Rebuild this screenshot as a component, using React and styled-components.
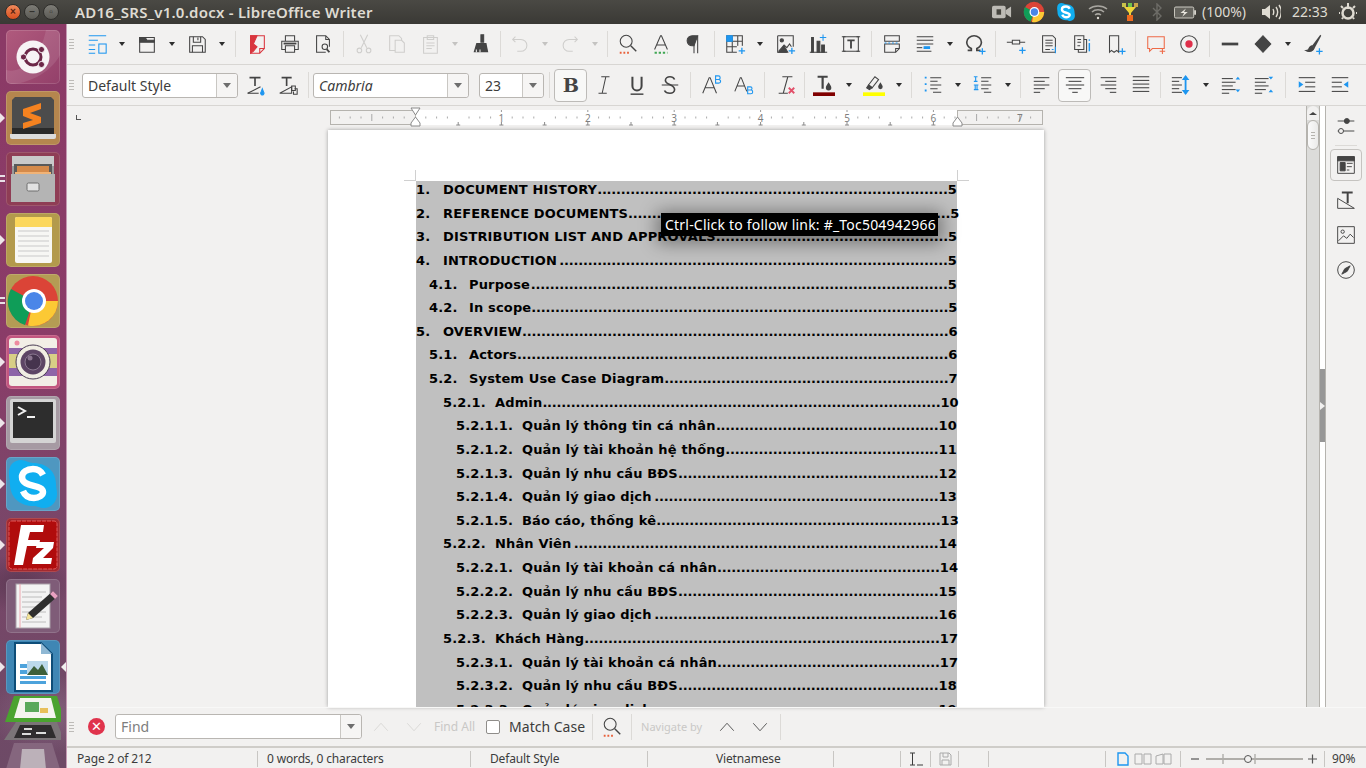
import React from 'react';
import styled, { createGlobalStyle, css } from 'styled-components';

const UI_FONT = `"Noto Sans", "Open Sans", sans-serif`;
const BLUE = '#1e96f0';

const Global = createGlobalStyle`
  html, body { margin: 0; padding: 0; height: 100%; overflow: hidden; }
  body { font-family: ${UI_FONT}; background: #f2f1f0; }
  #root { height: 100%; }
`;

const Screen = styled.div`
  width: 1366px;
  height: 768px;
  display: flex;
  flex-direction: column;
  overflow: hidden;
`;

/* ---------- top panel ---------- */
const Panel = styled.div`
  height: 24px;
  flex: none;
  display: flex;
  align-items: center;
  background: linear-gradient(#4a4944, #3a3935);
  color: #dfdbd2;
`;
const WinButtons = styled.div`
  display: flex;
  gap: 3px;
  margin-left: 5px;
  width: 70px;
`;
const WinButton = styled.span`
  width: 16px;
  height: 16px;
  border-radius: 50%;
  display: flex;
  align-items: center;
  justify-content: center;
  font: bold 10px/1 "Liberation Sans", sans-serif;
  color: #5a2410;
  border: 1px solid #2f2e2b;
  box-sizing: border-box;
  background: ${(p) => (p.$close ? 'linear-gradient(#f08a5c, #d9501e)' : 'linear-gradient(#7d7c76, #5b5a55)')};
  ${(p) => !p.$close && css`color: #32312d;`}
`;
const Title = styled.div`
  font: 600 15px/24px ${UI_FONT};
  letter-spacing: 0.24px;
  flex: 1;
  white-space: nowrap;
`;
const Tray = styled.div`
  display: flex;
  align-items: center;
  height: 24px;
`;
const TraySlot = styled.div`
  width: ${(p) => p.$w}px;
  display: flex;
  justify-content: center;
  align-items: center;
  font: 14px/24px ${UI_FONT};
  white-space: nowrap;
`;

/* ---------- launcher ---------- */
const Body = styled.div`
  flex: 1;
  display: flex;
  min-height: 0;
`;
const Launcher = styled.div`
  width: 67px;
  flex: none;
  box-sizing: border-box;
  padding: 6px 0 0 6px;
  display: flex;
  flex-direction: column;
  gap: 7px;
  overflow: hidden;
  position: relative;
  border-right: 1px solid #c69ab4;
  background:
    radial-gradient(ellipse 50px 30px at 20px 560px, rgba(60, 40, 60, .45), transparent),
    radial-gradient(ellipse 60px 40px at 50px 690px, rgba(190, 170, 190, .25), transparent),
    linear-gradient(#8b3a66 0, #8a3c68 45%, #7c4569 62%, #6d4a66 100%);
`;
const Tile = styled.div`
  width: 54px;
  height: 54px;
  flex: none;
  border-radius: 5px;
  position: relative;
  background: ${(p) => p.$bg};
  box-shadow: inset 0 0 0 1px rgba(255, 255, 255, .14);
  svg { display: block; width: 54px; height: 54px; filter: blur(.35px); }
`;
const Pip = styled.span`
  position: absolute;
  left: -6px;
  top: ${(p) => (p.$double ? 23 : 22)}px;
  ${(p) => (p.$double
    ? css`width: 5px; height: 2px; background: #e8e0e6; box-shadow: 0 5px 0 #e8e0e6;`
    : css`border-left: 5px solid #eee6ea; border-top: 5px solid transparent; border-bottom: 5px solid transparent;`)}
`;
const PipRight = styled.span`
  position: absolute;
  right: -6px;
  top: 22px;
  border-right: 5px solid #f1f0ef;
  border-top: 5px solid transparent;
  border-bottom: 5px solid transparent;
`;
const Folded = styled.svg`
  display: block;
  flex: none;
  width: 61px;
  height: 74px;
  margin: -6px 0 0 -6px;
  filter: blur(.35px);
`;

const UbuntuArt = () => (
  <svg viewBox="0 0 54 54">
    <path d="M0 40C14 44 34 30 40 0h9a5 5 0 0 1 5 5v20C44 44 20 54 5 54a5 5 0 0 1-5-5z" fill="#fff" opacity=".1" />
    <circle cx="27" cy="27" r="16.5" fill="#f7f3f5" />
    <circle cx="27" cy="27" r="8" fill="none" stroke="#6d2748" strokeWidth="3" />
    <circle cx="35.5" cy="19.5" r="3.1" fill="#6d2748" stroke="#f7f3f5" />
    <circle cx="35.5" cy="34.5" r="3.1" fill="#6d2748" stroke="#f7f3f5" />
    <circle cx="17.5" cy="27" r="3.1" fill="#6d2748" stroke="#f7f3f5" />
  </svg>
);
const SublimeArt = () => (
  <svg viewBox="0 0 54 54">
    <path d="M9 6h36l3 3v34H6V9z" fill="#4c4c4c" />
    <path d="M6 37h42v6H6z" fill="#2a2a2a" />
    <path d="M4 43h46v3a2 2 0 0 1-2 2H6a2 2 0 0 1-2-2z" fill="#dcdcdc" />
    <path d="M35 12v6l-11 4 11 4v6l-18 6v-6l10-3-10-4v-7z" fill="#f58220" />
  </svg>
);
const FilesArt = () => (
  <svg viewBox="0 0 54 54">
    <path d="M6 4h42v46H6z" fill="#9a9a9a" />
    <path d="M6 4h42v10H6z" fill="#c9c9c9" />
    <path d="M8 12h38v15H8z" fill="#5a5a5a" />
    <path d="M11 14h32v8H11z" fill="#d58a4a" />
    <path d="M9 20h36v9H9z" fill="#f0b377" />
    <path d="M5 22h44v28H5z" fill="#b4b4b4" />
    <rect x="21" y="31" width="12" height="8" rx="1.5" fill="#e2e2e2" stroke="#6e6e6e" />
  </svg>
);
const NotesArt = () => (
  <svg viewBox="0 0 54 54">
    <rect x="9" y="4" width="37" height="46" rx="2" fill="#f7f7f4" />
    <path d="M9 6a2 2 0 0 1 2-2h33a2 2 0 0 1 2 2v8H9z" fill="#fbd75c" />
    {[18, 23, 28, 33, 38, 43].map((y) => <path key={y} d={`M12 ${y}h31`} stroke="#c9c9c9" />)}
  </svg>
);
const ChromeMark = () => (
  <>
    <circle cx="27" cy="27" r="25" fill="#db4437" />
    <path d="M27 27 5 15a25 25 0 0 0 14 36z" fill="#0f9d58" />
    <path d="M27 27h25a25 25 0 0 1-30 24.500z" fill="#fcc934" />
    <circle cx="28" cy="27" r="12" fill="#fff" />
    <circle cx="28" cy="27" r="9" fill="#4a86e8" />
  </>
);
const ChromeArt = () => <svg viewBox="0 0 54 54"><ChromeMark /></svg>;
const CameraArt = () => (
  <svg viewBox="0 0 54 54">
    <rect x="3" y="3" width="48" height="48" rx="3" fill="#f2eee6" />
    <path d="M3 13h48v6H3zM3 33h48v8H3z" fill="#8e64a8" />
    <path d="M3 19h48v14H3z" fill="#d8cf86" />
    <circle cx="11" cy="8" r="2.500" fill="#ee8ba0" />
    <circle cx="27" cy="27" r="17" fill="#f1eee3" stroke="#4b3d55" />
    <circle cx="27" cy="27" r="12.500" fill="#5d4565" />
    <circle cx="27" cy="27" r="8" fill="#46344e" stroke="#8a7890" />
    <circle cx="24" cy="23" r="2.500" fill="#8b7690" />
  </svg>
);
const TerminalArt = () => (
  <svg viewBox="0 0 54 54">
    <rect x="4" y="3" width="46" height="44" rx="2" fill="#d4d4d4" />
    <rect x="7" y="6" width="40" height="36" fill="#2d2d2d" />
    <path d="M12 11l7 4-7 4" fill="none" stroke="#f2f2f2" strokeWidth="2" />
    <path d="M21 21h8" stroke="#f2f2f2" strokeWidth="2" />
  </svg>
);
const SkypeMark = () => (
  <>
    <path d="M15 3c5 0 7 3 12 3 14 0 23 9 23 21 0 4 1 6 1 10 0 8-6 14-13 14-5 0-6-2-11-2C13 49 4 39 4 27c0-4-1-6-1-11C3 8 8 3 15 3z" fill="#10aef0" />
    <path d="M37 18c-2-4-6-6-10-6-6 0-11 3-11 8 0 11 21 7 21 15 0 3-4 6-9 6-5 0-9-2-11-7" fill="none" stroke="#fff" strokeWidth="6.500" />
  </>
);
const SkypeArt = () => <svg viewBox="0 0 54 54"><SkypeMark /></svg>;
const ZillaArt = () => (
  <svg viewBox="0 0 54 54">
    <rect x="3" y="3" width="48" height="48" rx="3" fill="#b00c0c" stroke="#e25a5a" strokeDasharray="4 1" />
    <path d="M15 7h23l-1 7H24l-2 8h12l-1 6H21l-4 19H8z" fill="#fff" />
    <path d="M31 24h17l-1 6-10 10h9l-1 6H26l1-6 11-10h-8z" fill="#fff" />
  </svg>
);
const WriterArt = () => (
  <svg viewBox="0 0 54 54">
    <rect x="10" y="5" width="34" height="44" fill="#f3f3f3" stroke="#a9a0a8" />
    <path d="M14 5v44" stroke="#f0a8b0" />
    {[13, 18, 23, 28, 33, 38, 43].map((y) => <path key={y} d={`M16 ${y}h${y % 2 ? 24 : 20}`} stroke="#bcbcbc" />)}
    <path d="M47 12l5 5-25 22-7 2 2-7z" fill="#2f2f2f" />
    <path d="M47 12l5 5-3 3-5-5z" fill="#e8a0c0" />
    <path d="M22 34l5 5-7 2z" fill="#f3e39a" />
  </svg>
);
const ImpressArt = () => (
  <svg viewBox="0 0 54 54">
    <path d="M9 3h26l11 11v37H9z" fill="#fff" stroke="#0e4d78" strokeWidth="2" />
    <path d="M35 3l11 11H35z" fill="#8fb8d4" />
    <path d="M14 24h14v4H14zM14 30h14v4H14zM14 36h26v3H14zM14 41h26v3H14z" fill="#4da3dc" />
    <path d="M21 21h21v14H21z" fill="#bcd9ec" />
    <path d="M21 35l7-9 4 4 4-6 6 11z" fill="#3d5f3a" />
  </svg>
);

/* ---------- toolbars ---------- */
const Main = styled.div`
  flex: 1;
  min-width: 0;
  display: flex;
  flex-direction: column;
  background: #f2f1f0;
`;
const ToolRow = styled.div`
  height: 40px;
  flex: none;
  display: flex;
  align-items: center;
  padding-left: ${(p) => p.$pad}px;
  border-bottom: 1px solid #d8d6d3;
  position: relative;
`;
const Grip = styled.span`
  position: absolute;
  left: 2px;
  top: 50%;
  margin-top: -5px;
  width: 5px;
  height: 10px;
  background: repeating-linear-gradient(#bdbbb8 0 1px, transparent 1px 3px);
`;
const Tool = styled.div`
  width: ${(p) => p.$w || 33}px;
  height: 33px;
  flex: none;
  box-sizing: border-box;
  display: flex;
  align-items: center;
  justify-content: center;
  color: ${(p) => (p.$off ? '#cfcecc' : '#444')};
  ${(p) => p.$on && css`
    border: 1px solid #bdbbb8;
    border-radius: 4px;
    background: #f8f8f7;
    box-shadow: inset 0 0 1px #fff;
  `}
`;
const Drop = styled.div`
  width: 17px;
  height: 33px;
  flex: none;
  display: flex;
  align-items: center;
  justify-content: center;
  &::after {
    content: '';
    border-top: 4px solid ${(p) => (p.$off ? '#c4c3c1' : '#2e2e2e')};
    border-left: 3.500px solid transparent;
    border-right: 3.500px solid transparent;
  }
`;
const Sep = styled.div`
  width: ${(p) => p.$w}px;
  flex: none;
  display: flex;
  justify-content: center;
  &::after {
    content: '';
    width: 1px;
    height: 26px;
    background: #dcdad7;
  }
`;
const Glyph = styled.svg`
  width: 22px;
  height: 22px;
  display: block;
  fill: none;
  stroke: currentColor;
  stroke-width: 1.15;
`;
const Combo = styled.div`
  width: ${(p) => p.$w}px;
  height: 25px;
  flex: none;
  box-sizing: border-box;
  margin-left: ${(p) => p.$ml || 0}px;
  display: flex;
  background: #fff;
  border: 1px solid #b9b6b2;
  border-radius: 3px;
  font: 14px/23px ${UI_FONT};
  color: #3c3c3c;
`;
const ComboText = styled.div`
  flex: 1;
  padding-left: 5px;
  overflow: hidden;
  white-space: nowrap;
  ${(p) => p.$muted && css`color: #7d7d7d;`}
  ${(p) => p.$italic && css`font-style: italic;`}
`;
const ComboArrow = styled.div`
  width: 20px;
  flex: none;
  display: flex;
  align-items: center;
  justify-content: center;
  border-left: 1px solid #c9c7c3;
  background: #f6f5f4;
  border-radius: 0 3px 3px 0;
  &::after {
    content: '';
    border-top: 5px solid #6e6e6e;
    border-left: 4px solid transparent;
    border-right: 4px solid transparent;
  }
`;

const Plus = ({ x = 19.500, y = 19.500 }) => (
  <path d={`M${x - 3.500} ${y}h7M${x} ${y - 3.500}v7`} stroke={BLUE} strokeWidth="1.400" />
);
const lines = (list) => list.map(([x, y, w], i) => <path key={i} d={`M${x} ${y}h${w}`} />);

const ICONS = {
  sidebar: <g stroke={BLUE}><path d="M3 3h19M3 8h10M3 13h7M3 18h7M3 22h7" /><rect x="14" y="12" width="8" height="10" /></g>,
  open: <g><path d="M4 5h16v16H4z" /><path d="M4 5h6l2 3h8v2H4z" fill="currentColor" /></g>,
  save: <g><path d="M4 4h14l3 3v14H4z" /><path d="M8 4v6h8V4M7 21v-7h11v7" /><path d="M13 5v3" /></g>,
  pdf: <g><path d="M5 3h15v14l-5 5H5z" stroke="#d9363e" /><path d="M5 3h7l-4 9 4 3-4 5-3 2z" fill="#d9363e" stroke="#d9363e" /><path d="M20 17h-5v5" stroke="#d9363e" /></g>,
  print: <g><path d="M7 9V3h10v6M7 18H3V9h18v9h-4" /><path d="M7 14h10v7H7z" /><path d="M5 11.500h14" strokeWidth="2" /></g>,
  preview: <g><path d="M15 21H5V3h10l4 4v8M15 3v4h4" /><circle cx="14" cy="15" r="3" /><path d="M16 17.500l3 3.500" strokeWidth="2" /></g>,
  cut: <g><path d="M8 2l7 14M16 2L9 16" /><circle cx="7" cy="19" r="2.500" /><circle cx="17" cy="19" r="2.500" /></g>,
  copy: <g><path d="M4 3h10l3 3v13H4z" /><path d="M10 8h7l3 3v10H10z" fill="#f2f1f0" /></g>,
  paste: <g><path d="M5 5h15v17H5z" /><path d="M9 3h7v4H9zM8 11h9M8 14h9M8 17h6" /></g>,
  clone: <g><path d="M13 2h3v8h-3z" fill="currentColor" /><path d="M8 11h11l2 10H5z" fill="currentColor" stroke="none" /><path d="M8 21v-3M12 21v-3" stroke="#f2f1f0" /></g>,
  undo: <path d="M7 4 4 7l3 3M4 7h9a5.500 5.500 0 0 1 0 13h-4" />,
  redo: <path d="M17 4l3 3-3 3M20 7h-9a5.500 5.500 0 0 0 0 13h4" />,
  find: <g><circle cx="10" cy="9" r="6.500" /><path d="M15 14l6 6" strokeWidth="1.500" /><path d="M3 21.500h11" stroke="#e9603a" strokeWidth="2" strokeDasharray="2 2" /></g>,
  charA: <g><path d="M5 18 11.500 3h1L19 18M7.500 13h9" /><path d="M5 21.500h14" stroke="#3fa653" strokeWidth="2" strokeDasharray="2.500 2" /></g>,
  pilcrow: <g><path d="M16 3v19M12 3v19" /><path d="M16 3H10a5 5 0 0 0 0 11h2z" fill="currentColor" /></g>,
  table: <g><path d="M3 3h17v18H3zM3 9h17M3 15h17M9 3v18M15 3v18" /><path d="M3 3h6v6H3z" fill={BLUE} stroke={BLUE} /><path d="M14 14h10v10H14z" fill="#f2f1f0" stroke="none" /><Plus /></g>,
  image: <g><path d="M4 3h17v12M4 3v18h10" /><circle cx="8.500" cy="8" r="1.800" fill="currentColor" /><path d="M5 20l6-7 3 3 3-4 2 3" /><path d="M5 21l6-7 4 7z" fill="currentColor" /><Plus /></g>,
  chart: <g><path d="M3 21h19" /><path d="M5 5h2v16H5z M11 9h3v12h-3z M16 13h3v8h-3z" fill="currentColor" /><path d="M14 5h7M17.500 1.500v7" stroke={BLUE} /></g>,
  textbox: <g><path d="M4 4h16v16H4z" /><path d="M2 4h4M18 4h4M2 20h4M18 20h4" /><path d="M8 8h8M12 8v9" strokeWidth="2" /></g>,
  header: <g><path d="M4 3h16v6H4zM4 12h16v5l-4 4H4z" /><path d="M4 11h16" stroke={BLUE} strokeDasharray="2 2" /><path d="M20 17h-4v4" /></g>,
  fields: <g><path d="M3 4h18M3 8h18M3 12h18M3 20h16" /><path d="M11 15h6v2h-6z" fill={BLUE} stroke={BLUE} /><path d="M3 16h6" /></g>,
  omega: <g><path d="M4 19h4v-2C4 15 3 12 3 10c0-4 4-7 8-7s8 3 8 7c0 2-1 5-5 7v2h4" strokeWidth="1.800" /><Plus x={20} y={20} /></g>,
  link: <g><path d="M8 8h8v4H8zM2 10h6M16 10h6" /><Plus x={19} y={19} /></g>,
  footnote: <g><path d="M5 3h11l3 3v15H5zM8 8h8M8 11h8M8 14h8M8 18h5" /><path d="M19 15v7" stroke={BLUE} /><path d="M15 18h2" stroke={BLUE} /></g>,
  endnote: <g><path d="M4 3h10v15H4zM7 7h4M7 10h4M7 14h3" /><path d="M8 18v3h9V7h-3" /><path d="M20 11v9" stroke={BLUE} strokeWidth="1.600" /><path d="M20 7v1.500" stroke={BLUE} strokeWidth="1.600" /></g>,
  bookmark: <g><path d="M6 3h10v18l-2-2-3 2-3-2-2 2z" /><Plus x={20} y={20} /></g>,
  comment: <g stroke="#ee6a47"><path d="M3 4h18v13H8l-3 3v-3H3z" /><path d="M16 20h6M19 17v6" /></g>,
  record: <g><circle cx="12" cy="12" r="9" /><circle cx="12" cy="12" r="4" fill="#df2f4a" stroke="none" /></g>,
  line: <path d="M3 12h18" strokeWidth="3" />,
  diamond: <path d="M12 3l8.500 9-8.500 9-8.500-9z" fill="currentColor" />,
  brush: <g><path d="M20 2 11 14l3 2 7-13z" fill="currentColor" stroke="none" /><path d="M11 14c-3 0-3 3-4 4-.8.8-2 1-3 1 2 1.500 6 2 8-.5 1-1.200 1.500-2.500 1.500-2.500z" fill="currentColor" /><Plus x={19} y={20} /></g>,
  clearDirect: <g><path d="M6 4h12M12 4v9" strokeWidth="1.800" /><path d="M4 21l14-7" /><path d="M4 21h12" /><path d="M20 16l-1.500 4a1.800 1.800 0 1 0 3 0z" fill={BLUE} stroke={BLUE} /></g>,
  newStyle: <g><path d="M5 4h11M10.500 4v9" strokeWidth="1.800" /><path d="M3 21l13-7v7z" /><path d="M16 13h4v5h-4zM19 16h3v6h-4v-3" /></g>,
  bold: <text x="12" y="19.500" textAnchor="middle" fontFamily="DejaVu Serif" fontWeight="bold" fontSize="21" fill="currentColor" stroke="none">B</text>,
  italic: <path d="M9 3h9M6 21h9M14 3l-4 18" />,
  underline: <g><path d="M7 3v10a5 5 0 0 0 10 0V3" strokeWidth="2.200" /><path d="M5 22h14" strokeWidth="1.600" /></g>,
  strike: <g><path d="M17 6c-1-2-3-3-5-3-3 0-5 2-5 4 0 5 10 4 10 10 0 2-2 4-5 4-3 0-5-1-6-3" strokeWidth="1.800" /><path d="M3 12h18" /></g>,
  sup: <g><path d="M3 21 10 4h1l7 17M5.500 15h10" /><path d="M17 2h3a1.500 1.500 0 0 1 0 4h-3zM17 6h3.500a1.700 1.700 0 0 1 0 4H17z" stroke={BLUE} strokeWidth="1.200" /></g>,
  sub: <g><path d="M2 19 8 4h1l6 15M4.500 13h8" /><path d="M16 14h3a1.500 1.500 0 0 1 0 3.500h-3zM16 17.500h3.500a1.700 1.700 0 0 1 0 4H16z" stroke={BLUE} strokeWidth="1.200" /></g>,
  clearFmt: <g><path d="M8 3h11M14 3 9 21M4 21h10" /><path d="M15 15l6 6M21 15l-6 6" stroke="#e2506a" strokeWidth="2" /></g>,
  fontColor: <g><path d="M5 3h11M10.500 3v13" strokeWidth="2.400" /><path d="M18 8c1 2 3 4 3 6a3 3 0 0 1-6 0c0-2 2-4 3-6z" fill="currentColor" stroke="none" transform="translate(-1 1)" /><rect x="0" y="20" width="24" height="4" fill="#800000" stroke="none" /></g>,
  highlight: <g><path d="M6 12 13 3l4 3-7 9z" /><path d="M6 12l4 3-3 2-3-2z" fill="currentColor" /><path d="M19 9c1 2 2.500 3.500 2.500 5a2.500 2.500 0 0 1-5 0c0-1.500 1.500-3 2.500-5z" fill="currentColor" stroke="none" /><rect x="0" y="20" width="24" height="4" fill="#ffff00" stroke="none" /></g>,
  bullets: <g><path d="M9 4h12M9 8h8M9 12h12M9 16h8M12 20h9" /><path d="M4 3v2M4 10v2M4 17v2" stroke={BLUE} strokeWidth="2" /></g>,
  numbers: <g><path d="M10 4h11M10 8h8M10 12h11M10 16h8M13 20h8" /><path d="M2 3h4M4 3v5M2 8h4M2 12h5M2 17h5M3.500 12v5M5.500 12v5" stroke={BLUE} strokeWidth="1.200" /></g>,
  left: <g>{lines([[3, 4, 17], [3, 8, 12], [3, 12, 17], [3, 16, 12], [3, 20, 7]])}</g>,
  center: <g>{lines([[2, 4, 20], [5, 8, 14], [2, 12, 20], [5, 16, 14], [9, 20, 6]])}</g>,
  right: <g>{lines([[4, 4, 17], [9, 8, 12], [4, 12, 17], [9, 16, 12], [14, 20, 7]])}</g>,
  justify: <g>{lines([[3, 3, 18], [3, 7, 18], [3, 11, 18], [3, 15, 18], [3, 19, 18]])}</g>,
  spacing: <g>{lines([[2, 4, 11], [2, 8, 8], [2, 12, 11], [2, 16, 8], [2, 20, 11]])}<path d="M17 3v18" stroke={BLUE} strokeWidth="2" /><path d="M14 6l3-4 3 4zM14 18l3 4 3-4z" fill={BLUE} stroke={BLUE} /></g>,
  paraUp: <g>{lines([[2, 5, 12], [2, 9, 15], [2, 13, 12], [2, 17, 15], [2, 21, 8]])}<path d="M17 6l2.500-3L22 6zM17 17l2.500 3 2.500-3z" fill={BLUE} stroke="none" /></g>,
  paraDown: <g>{lines([[2, 5, 15], [2, 9, 12], [2, 13, 15], [2, 17, 12], [2, 21, 8]])}<path d="M17 3l2.500 3L22 3zM17 20l2.500-3 2.500 3z" fill={BLUE} stroke="none" /></g>,
  indentMore: <g>{lines([[3, 4, 18], [10, 9, 11], [10, 14, 11], [3, 19, 18]])}<path d="M3 8v7l5-3.500z" fill={BLUE} stroke="none" /></g>,
  indentLess: <g>{lines([[3, 4, 18], [3, 9, 11], [3, 14, 11], [3, 19, 18]])}<path d="M21 8v7l-5-3.500z" fill={BLUE} stroke="none" /></g>,
};
const Icon = ({ name }) => <Glyph viewBox="0 0 24 24">{ICONS[name]}</Glyph>;

const ROW_ONE = [
  ['sidebar'], 'drop', ['open'], 'drop', ['save'], 'drop', 10,
  ['pdf'], ['print'], ['preview'], 8,
  ['cut', 'off'], ['copy', 'off'], ['paste', 'off'], 'dropOff', ['clone'], 7,
  ['undo', 'off'], 'dropOff', ['redo', 'off'], 'dropOff', 8,
  ['find'], ['charA'], ['pilcrow'], 8,
  ['table'], 'drop', ['image'], ['chart'], ['textbox'], 8,
  ['header'], ['fields'], 'drop', ['omega'], 8,
  ['link'], ['footnote'], ['endnote'], ['bookmark'], 8,
  ['comment'], ['record'], 8,
  ['line'], ['diamond'], 'drop', ['brush'],
];
const ROW_TWO = [
  ['bold', 'on'], ['italic'], ['underline'], ['strike'], 8,
  ['sup'], ['sub'], 9,
  ['clearFmt'], 5,
  ['fontColor'], 'drop', ['highlight'], 'drop', 9,
  ['bullets'], 'drop', ['numbers'], 'drop', 9,
  ['left'], ['center', 'on'], ['right'], ['justify'], 7,
  ['spacing'], 'drop', ['paraUp'], ['paraDown'], 10,
  ['indentMore'], ['indentLess'],
];
const renderTools = (list) => list.map((item, i) => {
  if (item === 'drop') return <Drop key={i} />;
  if (item === 'dropOff') return <Drop key={i} $off />;
  if (typeof item === 'number') return <Sep key={i} $w={item} />;
  return <Tool key={i} $off={item[1] === 'off'} $on={item[1] === 'on'}><Icon name={item[0]} /></Tool>;
});

/* ---------- document ---------- */
const Workspace = styled.div`
  flex: 1;
  min-height: 0;
  display: flex;
`;
const DocArea = styled.div`
  flex: 1;
  min-width: 0;
  display: flex;
  flex-direction: column;
  background: #f2f1f0;
  position: relative;
`;
const RulerRow = styled.div`
  height: 24px;
  flex: none;
  padding-left: 263px;
  box-sizing: border-box;
  position: relative;
`;
const RulerCorner = styled.span`
  position: absolute;
  left: 9px;
  top: 9px;
  width: 4px;
  height: 4px;
  border-left: 1px solid #555;
  border-bottom: 1px solid #555;
`;
const RulerSvg = styled.svg`
  display: block;
  width: 713px;
  height: 24px;
`;
const Page = styled.div`
  flex: 1;
  width: 716px;
  margin-left: 261px;
  box-sizing: border-box;
  padding: 51px 87px 0 88px;
  background: #fff;
  box-shadow: 0 0 4px rgba(0, 0, 0, .35);
  position: relative;
  overflow: hidden;
  min-height: 0;
`;
const Toc = styled.div`
  background: #c0c0c0;
  position: relative;
  height: 560px;
  padding-top: 1px;
  &::before, &::after {
    content: '';
    position: absolute;
    top: -11px;
    width: 11px;
    height: 10px;
    border-bottom: 1px solid #d0d0d0;
  }
  &::before { left: -12px; border-right: 1px solid #d0d0d0; }
  &::after { right: -12px; border-left: 1px solid #d0d0d0; }
`;
const TocRow = styled.div`
  height: 23.64px;
  display: flex;
  padding-left: ${(p) => p.$indent}px;
  font: bold 13px/16px "DejaVu Sans", sans-serif;
  letter-spacing: 0.15px;
  color: #000;
  white-space: nowrap;
`;
const TocNum = styled.span`
  width: ${(p) => p.$w}px;
  flex: none;
`;
const TocLeader = styled.span`
  margin-left: auto;
  letter-spacing: -0.2px;
`;
const Hint = styled.div`
  position: absolute;
  left: 333px;
  top: 83px;
  height: 23px;
  width: 277px;
  box-sizing: border-box;
  padding-left: 4px;
  background: #000;
  color: #fff;
  font: 14px/24px ${UI_FONT};
  letter-spacing: 0.21px;
  white-space: nowrap;
  box-shadow: 0 3px 18px 4px rgba(0, 0, 0, .4);
`;
const Scroll = styled.div`
  width: 14px;
  flex: none;
  box-sizing: border-box;
  display: flex;
  flex-direction: column;
  align-items: center;
  background: #dcdcda;
  border-left: 1px solid #b5b3ae;
  border-right: 1px solid #b5b3ae;
`;
const ScrollUp = styled.div`
  height: 14px;
  width: 100%;
  background: #f2f1f0;
  border-radius: 6px 6px 0 0;
  display: flex;
  justify-content: center;
  align-items: center;
  &::after {
    content: '';
    border-bottom: 3px solid #444;
    border-left: 4px solid transparent;
    border-right: 4px solid transparent;
  }
`;
const ScrollThumb = styled.div`
  height: 30px;
  width: 100%;
  box-sizing: border-box;
  border: 1px solid #b5b3ae;
  border-radius: 6px;
  background: linear-gradient(90deg, #fafafa, #ebebea);
  display: flex;
  align-items: center;
  justify-content: center;
  &::after {
    content: '';
    width: 4px;
    height: 7px;
    background: repeating-linear-gradient(#b5b3ae 0 1px, transparent 1px 3px);
  }
`;
const Splitter = styled.div`
  width: 5px;
  flex: none;
  background: #fff;
  border-right: 1px solid #b5b3ae;
  padding-top: 263px;
`;
const SplitHandle = styled.div`
  width: 5px;
  height: 73px;
  background: #979797;
  display: flex;
  align-items: center;
  &::after {
    content: '';
    border-left: 5px solid #f2f1f0;
    border-top: 4px solid transparent;
    border-bottom: 4px solid transparent;
  }
`;
const Deck = styled.div`
  width: 40px;
  flex: none;
  display: flex;
  flex-direction: column;
  align-items: center;
  padding-top: 4px;
  color: #444;
  ${Glyph} { width: 20px; height: 20px; }
`;
const DeckTool = styled.div`
  width: 32px;
  height: 32px;
  box-sizing: border-box;
  flex: none;
  margin-bottom: ${(p) => p.$mb ?? 3}px;
  display: flex;
  align-items: center;
  justify-content: center;
  ${(p) => p.$on && css`
    border: 1px solid #c5c3c0;
    border-radius: 4px;
  `}
`;
const DeckRule = styled.div`
  width: 22px;
  height: 1px;
  flex: none;
  background: #dcdad7;
  margin: 3px 0;
`;

/* ---------- find + status ---------- */
const FindBar = styled.div`
  height: 39px;
  flex: none;
  display: flex;
  align-items: center;
  padding-left: 21px;
  position: relative;
  border-top: 1px solid #f8f8f7;
  box-sizing: border-box;
  border-bottom: 1px solid #f2f1f0;
`;
const CloseDot = styled.div`
  width: 17px;
  height: 17px;
  border-radius: 50%;
  background: #e0334c;
  flex: none;
  margin-right: 10px;
  color: #fff;
  display: flex;
  align-items: center;
  justify-content: center;
  font: 13px/1 "Liberation Sans", sans-serif;
`;
const Chevron = styled.div`
  width: 33px;
  flex: none;
  margin-left: ${(p) => p.$ml || 0}px;
  display: flex;
  justify-content: center;
  color: ${(p) => (p.$off ? '#d6d5d3' : '#444')};
  ${Glyph} { width: 18px; height: 18px; }
`;
const FindText = styled.span`
  font: ${(p) => p.$size || 14}px/20px ${UI_FONT};
  color: ${(p) => (p.$off ? '#c9c8c6' : '#3c3c3c')};
  margin-left: ${(p) => p.$ml || 0}px;
  white-space: nowrap;
  flex: none;
`;
const Check = styled.span`
  width: 14px;
  height: 14px;
  flex: none;
  box-sizing: border-box;
  margin-left: 11px;
  background: #fff;
  border: 1px solid #8f8d8a;
  border-radius: 2px;
`;
const Status = styled.div`
  height: 22px;
  flex: none;
  display: flex;
  align-items: center;
  border-top: 2px solid #cfcdc9;
  padding-top: 2px;
  box-sizing: border-box;
  font: 12px/20px ${UI_FONT};
  letter-spacing: -0.15px;
  color: #3c3c3c;
`;
const Cell = styled.div`
  width: ${(p) => p.$w}px;
  height: 16px;
  flex: none;
  box-sizing: border-box;
  display: flex;
  align-items: center;
  justify-content: ${(p) => p.$just || 'flex-start'};
  gap: ${(p) => p.$gap || 0}px;
  padding-left: ${(p) => p.$pad || 0}px;
  border-right: ${(p) => (p.$last ? 'none' : '1px solid #c8c6c3')};
  white-space: nowrap;
  color: ${(p) => p.$color || 'inherit'};
`;
const SmallIcon = styled.svg`
  width: ${(p) => p.$w || 16}px;
  height: 16px;
  fill: none;
  stroke: ${(p) => p.$color || 'currentColor'};
  display: block;
`;

// level, number, title, page, dots in the leader
const TOC = [
  [0, '1.', 'DOCUMENT HISTORY', '5', 74],
  [0, '2.', 'REFERENCE DOCUMENTS', '5', 68],
  [0, '3.', 'DISTRIBUTION LIST AND APPROVALS', '5', 49],
  [0, '4.', 'INTRODUCTION', '5', 82],
  [1, '4.1.', 'Purpose', '5', 88],
  [1, '4.2.', 'In scope', '5', 88],
  [0, '5.', 'OVERVIEW', '6', 90],
  [1, '5.1.', 'Actors', '6', 91],
  [1, '5.2.', 'System Use Case Diagram', '7', 60],
  [2, '5.2.1.', 'Admin', '10', 84],
  [3, '5.2.1.1.', 'Quản lý thông tin cá nhân', '10', 47],
  [3, '5.2.1.2.', 'Quản lý tài khoản hệ thống', '11', 45],
  [3, '5.2.1.3.', 'Quản lý nhu cầu BĐS', '12', 55],
  [3, '5.2.1.4.', 'Quản lý giao dịch', '13', 60],
  [3, '5.2.1.5.', 'Báo cáo, thống kê', '13', 60],
  [2, '5.2.2.', 'Nhân Viên', '14', 77],
  [3, '5.2.2.1.', 'Quản lý tài khoản cá nhân', '14', 47],
  [3, '5.2.2.2.', 'Quản lý nhu cầu BĐS', '15', 55],
  [3, '5.2.2.3.', 'Quản lý giao dịch', '16', 60],
  [2, '5.2.3.', 'Khách Hàng', '17', 75],
  [3, '5.2.3.1.', 'Quản lý tài khoản cá nhân', '17', 47],
  [3, '5.2.3.2.', 'Quản lý nhu cầu BĐS', '18', 55],
  [3, '5.2.3.3.', 'Quản lý giao dịch', '19', 60],
];
const LEVELS = [
  { indent: 0, num: 27 },
  { indent: 13, num: 40 },
  { indent: 27, num: 52 },
  { indent: 40, num: 66 },
];

const Ruler = () => {
  const ticks = [];
  const M = 85; // left margin edge inside the strip
  const P = 10.8; // one eighth of an inch
  for (let i = -7; i < 58; i++) {
    const x = M + i * P;
    if (x < 3 || x > 710) continue;
    const inText = x > M + 1 && x < 627;
    if (i % 4 === 0 && i !== 0 && inText) {
      ticks.push(<path key={i} d={`M${x} 17v3M${x - 2} 20h4`} stroke="#8a8a8a" />);
      if (i % 8 === 0) ticks.push(<path key={`t${i}`} d={`M${x} 5v2`} stroke="#9a9a9a" />);
    } else if (i % 4 === 0 && i !== 0) {
      ticks.push(<path key={i} d={`M${x} 9v7`} stroke="#a8a8a8" />);
    } else if (i !== 0) {
      ticks.push(<path key={i} d={`M${x} 11.500v2`} stroke="#aaa" />);
    }
  }
  return (
    <RulerSvg viewBox="0 1 713 24">
      <rect x="0" y="5" width="713" height="15" fill="#fff" />
      <rect x=".5" y="5.500" width="85" height="14" fill="#f2f1f0" stroke="#b5b3ae" />
      <rect x="627.500" y="5.500" width="85" height="14" fill="#f2f1f0" stroke="#b5b3ae" />
      {ticks}
      {[1, 2, 3, 4, 5, 6, 7].map((n) => (
        <text key={n} x={85 + n * 86.4} y="17" textAnchor="middle" fontSize="10" fontFamily="Noto Sans" fill="#7f7f7f">{n}</text>
      ))}
      <path d="M81 3h9l-4.500 7zM81 21h9v-3l-4.500-6-4.500 6z" fill="#fff" stroke="#8a8a8a" />
      <path d="M623 21h9v-3l-4.500-6-4.500 6z" fill="#fff" stroke="#8a8a8a" />
    </RulerSvg>
  );
};

const Up = () => <Glyph viewBox="0 0 24 24"><path d="M3 17 12 7l9 10" /></Glyph>;
const Down = () => <Glyph viewBox="0 0 24 24"><path d="M3 7l9 10 9-10" /></Glyph>;

export default function App() {
  return (
    <Screen>
      <Global />
      <Panel>
        <WinButtons>
          <WinButton $close>×</WinButton>
          <WinButton>–</WinButton>
          <WinButton>▫</WinButton>
        </WinButtons>
        <Title>AD16_SRS_v1.0.docx - LibreOffice Writer</Title>
        <Tray>
          <TraySlot $w={20}>
            <svg width="22" height="16" viewBox="0 0 22 16"><rect x="0" y="1" width="15" height="14" rx="2" fill="#bdbbb5" /><path d="M15 6l6-4v12l-6-4z" fill="#bdbbb5" /><rect x="5" y="5" width="5" height="6" fill="#46453f" /></svg>
          </TraySlot>
          <TraySlot $w={44}>
            <svg width="22" height="22" viewBox="0 0 54 54"><ChromeMark /></svg>
          </TraySlot>
          <TraySlot $w={20}>
            <svg width="22" height="22" viewBox="0 0 54 54"><SkypeMark /></svg>
          </TraySlot>
          <TraySlot $w={44}>
            <svg width="20" height="16" viewBox="0 0 20 16" fill="none" stroke="#a8a6a0" strokeWidth="1.500"><path d="M1 5c5-4 13-4 18 0M4 8c3-3 9-3 12 0M7 11c2-1.500 4-1.500 6 0" /><circle cx="10" cy="14" r="1.200" fill="#dfdbd2" stroke="none" /></svg>
          </TraySlot>
          <TraySlot $w={20}>
            <svg width="16" height="18" viewBox="0 0 16 18"><path d="M0 0h4v4H0z" fill="#c9c24a" /><path d="M6 0h4v4H6z" fill="#6fc24a" /><path d="M12 0h4v4h-4z" fill="#c9a34a" /><path d="M2 4h12L9 10v2H7v-2z" fill="#f0d33a" /><path d="M5 12h6v6H5z" fill="#ee6a1f" /></svg>
          </TraySlot>
          <TraySlot $w={34}>
            <svg width="10" height="18" viewBox="0 0 10 18" fill="none" stroke="#6d6c67" strokeWidth="1.400"><path d="M1 5l8 8-4 4V1l4 4-8 8" /></svg>
          </TraySlot>
          <TraySlot $w={22}>
            <svg width="24" height="13" viewBox="0 0 24 13"><rect x=".5" y=".5" width="21" height="12" rx="1.500" fill="#65645e" stroke="#d8d5cd" /><path d="M22 4h2v5h-2z" fill="#d8d5cd" /><path d="M13 2 7 7h4l-2 4 6-5h-4z" fill="#e8e5dd" /></svg>
          </TraySlot>
          <TraySlot $w={56}>(100%)</TraySlot>
          <TraySlot $w={38}>
            <svg width="20" height="16" viewBox="0 0 20 16" fill="none" stroke="#dfdbd2" strokeWidth="1.400"><path d="M1 5h3l5-4v14l-5-4H1z" fill="#dfdbd2" stroke="none" /><path d="M12 5c1 2 1 4 0 6M15 3c2 3 2 7 0 10M18 1c3 4 3 10 0 14" /></svg>
          </TraySlot>
          <TraySlot $w={40}>22:33</TraySlot>
          <TraySlot $w={36}>
            <svg width="18" height="18" viewBox="0 0 18 18"><circle cx="9" cy="10" r="5.500" fill="none" stroke="#dfdbd2" strokeWidth="2.500" /><path d="M9 0v6" stroke="#dfdbd2" strokeWidth="2" /><path d="M2 3 4 5M16 3l-2 2M1 10H0M18 10h-1M3 16l1-1.500M15 16l-1-1.500" stroke="#dfdbd2" strokeWidth="2" /></svg>
          </TraySlot>
        </Tray>
      </Panel>

      <Body>
        <Launcher>
          <Tile $bg="linear-gradient(135deg, #b05a7d, #93406a)"><UbuntuArt /></Tile>
          <Tile $bg="#b5864e"><Pip /><SublimeArt /></Tile>
          <Tile $bg="#8f3d55"><Pip $double /><FilesArt /></Tile>
          <Tile $bg="#b39a4c"><Pip /><NotesArt /></Tile>
          <Tile $bg="#b49c54"><Pip $double /><ChromeArt /></Tile>
          <Tile $bg="#c2567f"><Pip /><CameraArt /></Tile>
          <Tile $bg="#a69aa3"><Pip /><TerminalArt /></Tile>
          <Tile $bg="#4f97c0"><Pip /><SkypeArt /></Tile>
          <Tile $bg="#a32a30"><Pip /><ZillaArt /></Tile>
          <Tile $bg="#7f5c78"><WriterArt /></Tile>
          <Tile $bg="#3f86b4"><Pip /><PipRight /><ImpressArt /></Tile>
          <Folded viewBox="0 0 61 74">
            <path d="M14 1h43l8 26H5z" fill="#4aa32f" />
            <path d="M20 3h31l5 20H14z" fill="#f4f4ee" />
            <path d="M25 7h14v10H25z" fill="#5aa85a" />
            <path d="M40 13h8v5h-8z" fill="#e8c05a" />
            <path d="M16 27h41l7 18H4z" fill="#7b7478" />
            <path d="M20 30h31l5 13H14z" fill="#2f2c2e" />
            <path d="M24 34h8M36 38h10M22 39h9" stroke="#dcdcdc" strokeWidth="2" />
            <path d="M14 48h38l8 26H6z" fill="#85667e" />
            <path d="M22 54h22l2 20H20z" fill="#c9c4c8" opacity=".8" />
          </Folded>
        </Launcher>

        <Main>
          <ToolRow $pad={13.500}>
            <Grip />
            {renderTools(ROW_ONE)}
          </ToolRow>
          <ToolRow $pad={15}>
            <Grip />
            <Combo $w={156}><ComboText>Default Style</ComboText><ComboArrow /></Combo>
            <Tool><Icon name="clearDirect" /></Tool>
            <Tool><Icon name="newStyle" /></Tool>
            <Sep $w={9} />
            <Combo $w={156}><ComboText $italic>Cambria</ComboText><ComboArrow /></Combo>
            <Combo $w={65} $ml={10}><ComboText>23</ComboText><ComboArrow /></Combo>
            <Sep $w={10} />
            {renderTools(ROW_TWO)}
          </ToolRow>

          <Workspace>
            <DocArea>
              <RulerRow>
                <RulerCorner />
                <Ruler />
              </RulerRow>
              <Page>
                <Toc>
                  {TOC.map(([lvl, num, title, page, dots]) => (
                    <TocRow key={num} $indent={LEVELS[lvl].indent}>
                      <TocNum $w={LEVELS[lvl].num}>{num}</TocNum>
                      <span>{title}</span>
                      <TocLeader>{'.'.repeat(dots)}</TocLeader>
                      <span>{page}</span>
                    </TocRow>
                  ))}
                </Toc>
                <Hint>Ctrl-Click to follow link: #_Toc504942966</Hint>
              </Page>
            </DocArea>
            <Scroll>
              <ScrollUp />
              <ScrollThumb />
            </Scroll>
            <Splitter><SplitHandle /></Splitter>
            <Deck>
              <DeckTool $mb={0}>
                <Glyph viewBox="0 0 24 24"><path d="M2 6h20M2 18h20" /><circle cx="13" cy="6" r="3" fill="currentColor" /><circle cx="6" cy="18" r="3" fill="#f2f1f0" /></Glyph>
              </DeckTool>
              <DeckRule />
              <DeckTool $on>
                <Glyph viewBox="0 0 24 24"><path d="M2 2h20v20H2z" /><path d="M2 2h20v5H2zM5 9h6v10H5z" fill="currentColor" /><path d="M13 10h7M13 14h6M13 18h3" /></Glyph>
              </DeckTool>
              <DeckTool>
                <Glyph viewBox="0 0 24 24"><path d="M7 3h13M14 3v13" strokeWidth="2.400" /><path d="M2 10v12h20z" /></Glyph>
              </DeckTool>
              <DeckTool>
                <Glyph viewBox="0 0 24 24"><path d="M2 2h20v20H2z" /><circle cx="8" cy="8" r="2" /><path d="M3 19l6-6 4 3 4-5 4 4" /></Glyph>
              </DeckTool>
              <DeckTool>
                <Glyph viewBox="0 0 24 24"><circle cx="12" cy="12" r="10" /><path d="M17 7 13.500 13.500 7 17l3.500-6.500z" fill="currentColor" /></Glyph>
              </DeckTool>
            </Deck>
          </Workspace>

          <FindBar>
            <Grip />
            <CloseDot>✕</CloseDot>
            <Combo $w={247}><ComboText $muted>Find</ComboText><ComboArrow /></Combo>
            <Chevron $off $ml={2}><Up /></Chevron>
            <Chevron $off><Down /></Chevron>
            <FindText $off $size={12} $ml={4}>Find All</FindText>
            <Check />
            <FindText $ml={9}>Match Case</FindText>
            <Sep $w={15} />
            <Tool $w={24}><Icon name="find" /></Tool>
            <Sep $w={15} />
            <FindText $off $size={11} $ml={2}>Navigate by</FindText>
            <Chevron $ml={8}><Up /></Chevron>
            <Chevron><Down /></Chevron>
            <Sep $w={9} />
          </FindBar>
          <Status>
            <Cell $w={191} $pad={10}>Page 2 of 212</Cell>
            <Cell $w={213} $pad={9}>0 words, 0 characters</Cell>
            <Cell $w={177} $pad={19}>Default Style</Cell>
            <Cell $w={186} $pad={68}>Vietnamese</Cell>
            <Cell $w={67} />
            <Cell $w={30} $just="center">
              <SmallIcon viewBox="0 0 16 16"><path d="M2 2h5M2 14h5M4.500 2v12M9 14h6" /></SmallIcon>
            </Cell>
            <Cell $w={28} $just="center" $color="#aaa">
              <SmallIcon viewBox="0 0 16 16"><path d="M3 2h9l2 2v10H3zM6 2v4h5V2M5 14V9h7v5" /></SmallIcon>
            </Cell>
            <Cell $w={30} />
            <Cell $w={117} />
            <Cell $w={75} $pad={9} $gap={3} $color="#aaa">
              <SmallIcon viewBox="0 0 16 16" $color={BLUE}><path d="M3 2h7l3 3v9H3z" strokeWidth="1.400" /></SmallIcon>
              <SmallIcon viewBox="0 0 18 16" $w={18}><path d="M1 3h7v10H1zM10 3h7v10h-7z" /></SmallIcon>
              <SmallIcon viewBox="0 0 18 16" $w={18}><path d="M1 5l7-2v10H1zM9 3h7v10H9z" /></SmallIcon>
            </Cell>
            <Cell $w={144} $pad={10}>
              <svg width="130" height="16" viewBox="0 0 130 16" fill="none">
                <path d="M0 8h8" stroke="#555" strokeWidth="1.200" />
                <path d="M15 8h97" stroke="#b0aeaa" strokeWidth="2" />
                <path d="M32 3v10M64 3v10" stroke="#b0aeaa" strokeWidth="1.400" />
                <circle cx="57" cy="8" r="3.500" fill="#f2f1f0" stroke="#555" />
                <path d="M117 8h9M121.500 3.500v9" stroke="#555" strokeWidth="1.200" />
              </svg>
            </Cell>
            <Cell $w={41} $pad={7} $last>90%</Cell>
          </Status>
        </Main>
      </Body>
    </Screen>
  );
}
